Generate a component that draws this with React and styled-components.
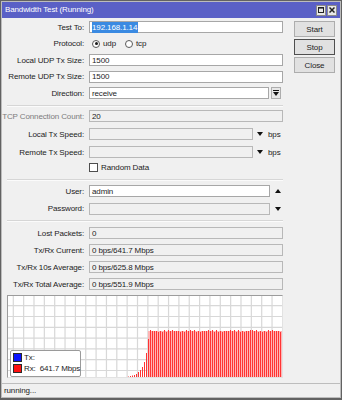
import React from "react";
import styled, { createGlobalStyle } from "styled-components";

const GlobalStyle = createGlobalStyle`
  html, body {
    margin: 0;
    padding: 0;
    background: #ffffff;
  }
  body {
    font-family: "Liberation Sans", Arial, sans-serif;
    font-size: 8px;
    letter-spacing: -0.12px;
    color: #1c1c1c;
  }
  * {
    box-sizing: border-box;
  }
`;

const Window = styled.div`
  width: 342px;
  height: 400px;
  display: flex;
  flex-direction: column;
  background: #f0f0f0;
  border: 1px solid #626262;
  border-bottom-width: 2px;
  padding: 1px;
  box-shadow: inset 0 0 0 1px #bcbcbc;
`;

const TitleBar = styled.div`
  height: 16px;
  display: flex;
  align-items: center;
  padding: 0 3px 0 3px;
  background: #5a60c6;
  color: #ffffff;
`;

const Title = styled.div`
  flex: 1;
  line-height: 16px;
`;

const TitleButton = styled.div`
  width: 10px;
  height: 11px;
  margin-left: 1px;
  display: flex;
  align-items: center;
  justify-content: center;
  background: #e8e8e8;
  border: 1px solid #fafafa;
  outline: 1px solid #8a8a8a;
  outline-offset: -1px;
`;

const Body = styled.div`
  flex: 1;
  display: flex;
  padding-top: 3px;
`;

const FormCol = styled.div`
  width: 281px;
  display: flex;
  flex-direction: column;
`;

const Row = styled.div`
  display: grid;
  grid-template-columns: 82px auto;
  column-gap: 5px;
  height: ${(p) => p.$h || 12}px;
  margin-top: ${(p) => p.$mt || 0}px;
  align-items: center;
`;

const Label = styled.div`
  display: flex;
  justify-content: flex-end;
  white-space: nowrap;
  color: ${(p) => (p.$disabled ? "#7c7c7c" : "#1c1c1c")};
`;

const Field = styled.div`
  display: flex;
  align-items: center;
  height: 100%;
`;

const Input = styled.div`
  width: ${(p) => p.$w}px;
  height: 12px;
  display: flex;
  align-items: center;
  padding-left: 2px;
  white-space: nowrap;
  background: ${(p) => (p.$gray ? "#f0f0f0" : "#ffffff")};
  border: 1px solid ${(p) => (p.$gray ? "#b8b8b8" : "#a7a7a7")};
`;

const Selected = styled.span`
  background: #3a8ae2;
  color: #ffffff;
  padding: 1px 1px 1px 0;
`;

const DropButton = styled.div`
  width: 10px;
  height: 12px;
  margin-left: 2px;
  display: flex;
  align-items: center;
  justify-content: center;
  background: #e6e6e6;
  border: 1px solid #adadad;
`;

const Arrow = styled.div`
  display: flex;
  align-items: center;
  margin-left: ${(p) => p.$ml}px;
`;

const Unit = styled.span`
  margin-left: 5px;
`;

const Radio = styled.span`
  width: 8px;
  height: 8px;
  margin-left: ${(p) => p.$ml}px;
  border-radius: 50%;
  border: 1px solid #5a5a5a;
  background: #ffffff;
  display: flex;
  align-items: center;
  justify-content: center;
  &::after {
    content: "";
    width: 3px;
    height: 3px;
    border-radius: 50%;
    background: ${(p) => (p.$on ? "#1a1a1a" : "transparent")};
  }
`;

const OptionText = styled.span`
  margin-left: 3px;
`;

const Checkbox = styled.span`
  width: 9px;
  height: 9px;
  background: #ffffff;
  border: 1px solid #4d4d4d;
`;

const Separator = styled.div`
  margin: ${(p) => p.$mt}px 0 0 5px;
  height: 2px;
  border-top: 1px solid #d6d6d6;
  border-bottom: 1px solid #fbfbfb;
`;

const ChartBox = styled.div`
  position: relative;
  margin: 5px 0 0 5px;
  width: 276px;
  height: 83px;
  background: #ffffff;
  border: 1px solid #e2e2e2;
  border-top-color: #9c9c9c;
  border-left-color: #9c9c9c;
`;

const Legend = styled.div`
  position: absolute;
  left: 2px;
  top: 54px;
  width: 71px;
  height: 27px;
  padding: 2px 0 0 2px;
  display: flex;
  flex-direction: column;
  gap: 2px;
  white-space: nowrap;
  background: #ffffff;
  border: 1px solid #9a9a9a;
  border-radius: 2px;
`;

const LegendRow = styled.div`
  display: flex;
  align-items: center;
  height: 9px;
`;

const Swatch = styled.span`
  width: 9px;
  height: 9px;
  margin-right: 2px;
  flex-shrink: 0;
  background: ${(p) => p.$color};
  border: 1px solid #2a2a2a;
`;

const LegendValue = styled.span`
  margin-left: 4px;
`;

const ButtonCol = styled.div`
  width: 41px;
  margin-left: 11px;
  display: flex;
  flex-direction: column;
  gap: 2px;
`;

const Button = styled.div`
  height: 16px;
  display: flex;
  align-items: center;
  justify-content: center;
  background: #e1e1e1;
  border: 1px solid ${(p) => (p.$default ? "#4f4f4f" : "#adadad")};
`;

const StatusBar = styled.div`
  height: 14px;
  padding-left: 2px;
  display: flex;
  align-items: center;
  border-top: 1px solid #bdbdbd;
`;

const Down = () => (
  <svg width="6" height="4" viewBox="0 0 6 4">
    <polygon points="0,0 6,0 3,4" fill="#111" />
  </svg>
);

const Up = () => (
  <svg width="6" height="4" viewBox="0 0 6 4">
    <polygon points="0,4 6,4 3,0" fill="#111" />
  </svg>
);

const DropGlyph = () => (
  <svg width="6" height="6" viewBox="0 0 6 6">
    <rect x="0" y="0" width="6" height="1" fill="#111" />
    <polygon points="0,2 6,2 3,6" fill="#111" />
  </svg>
);

// chart data (inner coordinates, 274 x 81)
const ramp = [0.5, 1, 1.5, 2, 3, 5, 7, 10, 15, 24, 38];
const bars = [];
ramp.forEach((h, i) => bars.push({ x: 120 + i * 2, h }));
for (let x = 142; x <= 273; x += 2) {
  const v = Math.round(Math.sin(x * 1.7) * 0.8 + Math.cos(x * 0.31) * 0.5);
  bars.push({ x, h: 46 + v });
}

const Chart = () => {
  const w = 274;
  const h = 81;
  const vLines = [];
  for (let x = 5.3; x < w; x += 10.35) vLines.push(x);
  const hLines = [];
  for (let y = 9.7; y < h; y += 10.8) hLines.push(y);
  return (
    <svg width={w} height={h} viewBox={`0 0 ${w} ${h}`} style={{ display: "block" }}>
      {vLines.map((x) => (
        <line key={"v" + x} x1={x} y1="0" x2={x} y2={h} stroke="#d8d8d8" strokeWidth="1.2" />
      ))}
      {hLines.map((y) => (
        <line key={"h" + y} x1="0" y1={y} x2={w} y2={y} stroke="#d8d8d8" strokeWidth="1.2" />
      ))}
      <rect x="140" y={h - 46} width={w - 140} height="46" fill="#ffb4b4" />
      {bars.map((b) => (
        <rect key={b.x} x={b.x} y={h - b.h} width="1" height={b.h} fill="#ff3434" />
      ))}
    </svg>
  );
};

export default function App() {
  return (
    <>
      <GlobalStyle />
      <Window>
        <TitleBar>
          <Title>Bandwidth Test (Running)</Title>
          <TitleButton>
            <svg width="6" height="6" viewBox="0 0 6 6">
              <rect x="0.5" y="0.5" width="5" height="5" fill="none" stroke="#222" />
              <rect x="0" y="0" width="6" height="1.6" fill="#222" />
            </svg>
          </TitleButton>
          <TitleButton>
            <svg width="6" height="6" viewBox="0 0 6 6">
              <path d="M0.5 0.5 L5.5 5.5 M5.5 0.5 L0.5 5.5" stroke="#222" strokeWidth="1.5" />
            </svg>
          </TitleButton>
        </TitleBar>
        <Body>
          <FormCol>
            <Row>
              <Label>Test To:</Label>
              <Field>
                <Input $w={194}>
                  <Selected>192.168.1.14</Selected>
                </Input>
              </Field>
            </Row>
            <Row $mt={4.5}>
              <Label>Protocol:</Label>
              <Field>
                <Radio $ml={3} $on />
                <OptionText>udp</OptionText>
                <Radio $ml={9} />
                <OptionText>tcp</OptionText>
              </Field>
            </Row>
            <Row $mt={4.5}>
              <Label>Local UDP Tx Size:</Label>
              <Field>
                <Input $w={194}>1500</Input>
              </Field>
            </Row>
            <Row $mt={4.5}>
              <Label>Remote UDP Tx Size:</Label>
              <Field>
                <Input $w={194}>1500</Input>
              </Field>
            </Row>
            <Row $mt={4.5}>
              <Label>Direction:</Label>
              <Field>
                <Input $w={180}>receive</Input>
                <DropButton>
                  <DropGlyph />
                </DropButton>
              </Field>
            </Row>

            <Separator $mt={6} />

            <Row $mt={3}>
              <Label $disabled>TCP Connection Count:</Label>
              <Field>
                <Input $w={194} $gray>20</Input>
              </Field>
            </Row>
            <Row $mt={6}>
              <Label>Local Tx Speed:</Label>
              <Field>
                <Input $w={164} $gray />
                <Arrow $ml={4}>
                  <Down />
                </Arrow>
                <Unit>bps</Unit>
              </Field>
            </Row>
            <Row $mt={6}>
              <Label>Remote Tx Speed:</Label>
              <Field>
                <Input $w={164} $gray />
                <Arrow $ml={4}>
                  <Down />
                </Arrow>
                <Unit>bps</Unit>
              </Field>
            </Row>
            <Row $mt={5} $h={9}>
              <span />
              <Field>
                <Checkbox />
                <OptionText>Random Data</OptionText>
              </Field>
            </Row>

            <Separator $mt={6.5} />

            <Row $mt={4.5}>
              <Label>User:</Label>
              <Field>
                <Input $w={181}>admin</Input>
                <Arrow $ml={4.5}>
                  <Up />
                </Arrow>
              </Field>
            </Row>
            <Row $mt={5.5}>
              <Label>Password:</Label>
              <Field>
                <Input $w={181} $gray />
                <Arrow $ml={4.5}>
                  <Down />
                </Arrow>
              </Field>
            </Row>

            <Separator $mt={5.5} />

            <Row $mt={5}>
              <Label>Lost Packets:</Label>
              <Field>
                <Input $w={194} $gray>0</Input>
              </Field>
            </Row>
            <Row $mt={5}>
              <Label>Tx/Rx Current:</Label>
              <Field>
                <Input $w={194} $gray>0 bps/641.7 Mbps</Input>
              </Field>
            </Row>
            <Row $mt={5}>
              <Label>Tx/Rx 10s Average:</Label>
              <Field>
                <Input $w={194} $gray>0 bps/625.8 Mbps</Input>
              </Field>
            </Row>
            <Row $mt={5}>
              <Label>Tx/Rx Total Average:</Label>
              <Field>
                <Input $w={194} $gray>0 bps/551.9 Mbps</Input>
              </Field>
            </Row>

            <ChartBox>
              <Chart />
              <Legend>
                <LegendRow>
                  <Swatch $color="#0a14ff" />
                  Tx:
                </LegendRow>
                <LegendRow>
                  <Swatch $color="#ff1010" />
                  Rx:
                  <LegendValue>641.7 Mbps</LegendValue>
                </LegendRow>
              </Legend>
            </ChartBox>
          </FormCol>
          <ButtonCol>
            <Button>Start</Button>
            <Button $default>Stop</Button>
            <Button>Close</Button>
          </ButtonCol>
        </Body>
        <StatusBar>running...</StatusBar>
      </Window>
    </>
  );
}
